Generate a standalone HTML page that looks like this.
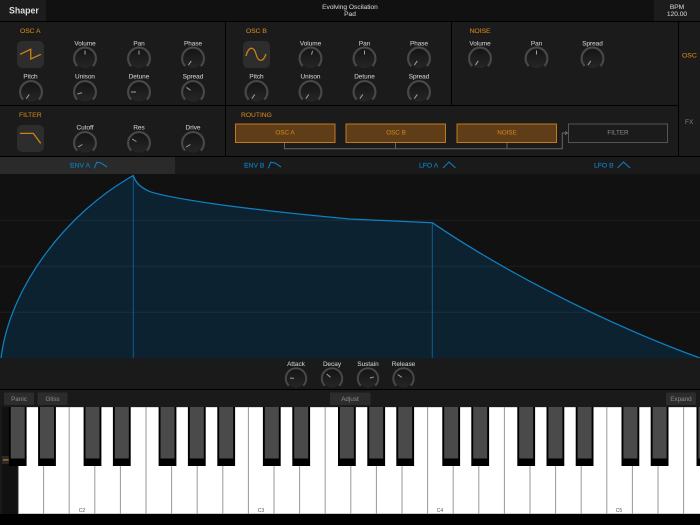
<!DOCTYPE html>
<html>
<head>
<meta charset="utf-8">
<title>Shaper</title>
<style>
html,body{margin:0;padding:0;background:#000;}
svg{display:block;}
text{font-family:"Liberation Sans",sans-serif;}
.l{font-size:6.4px;fill:#c4c4c4;stroke:#c4c4c4;stroke-width:.1;text-anchor:middle;}
.tp{font-size:6.6px;fill:#c4c4c4;stroke:#c4c4c4;stroke-width:.1;text-anchor:middle;}
.h{font-size:6.7px;fill:#c9801c;stroke:#c9801c;stroke-width:.12;}
.b{font-size:6.3px;fill:#c9801c;stroke:#c9801c;stroke-width:.1;text-anchor:middle;}
.t{font-size:6.8px;fill:#0e7cc0;stroke:#0e7cc0;stroke-width:.15;}
.g{font-size:6.3px;fill:#828282;stroke:#828282;stroke-width:.1;text-anchor:middle;}
.i{stroke:#d07f16;stroke-width:1.3;fill:none;}
.n{stroke:#0e7cc0;stroke-width:1.1;fill:none;}
.p{stroke:#a0a0a0;stroke-width:1;}
</style>
</head>
<body>
<svg width="700" height="525" viewBox="0 0 700 525" xmlns="http://www.w3.org/2000/svg">
<defs>
<linearGradient id="d" x1="0" y1="0" x2="0" y2="1"><stop offset="0" stop-color="#151515"/><stop offset="1" stop-color="#262626"/></linearGradient>
<g id="k"><circle r="9.6" fill="url(#d)"/><path d="M-7.8,7.6A10.9,10.9 0 1 1 7.8,7.6" fill="none" stroke="#484848" stroke-width="2.2"/></g>
<g id="s"><circle r="9" fill="url(#d)"/><path d="M-7.2,7.2A10.2,10.2 0 1 1 7.2,7.2" fill="none" stroke="#484848" stroke-width="2"/></g>
<g id="bk"><rect x="-8.9" y="407" width="17.8" height="59" fill="#000"/><rect x="-7" y="407" width="14" height="51.5" fill="#4a4a4a"/></g>
</defs>

<rect width="700" height="525" fill="#000"/>
<!-- top bar -->
<rect width="700" height="21" fill="#111"/>
<rect width="46" height="21" fill="#1c1c1c"/>
<rect x="654" width="46" height="21" fill="#1c1c1c"/>
<text x="9" y="13.3" font-size="8.8" font-weight="bold" fill="#ddd">Shaper</text>
<text x="350" y="9" class="tp">Evolving Oscilation</text>
<text x="350" y="15.8" class="tp">Pad</text>
<text x="677" y="9" class="tp">BPM</text>
<text x="677" y="16" class="tp">120.00</text>

<!-- panels -->
<rect y="22" width="225" height="83" fill="#1b1b1b"/>
<rect x="226" y="22" width="225" height="83" fill="#1b1b1b"/>
<rect x="452" y="22" width="226" height="83" fill="#1b1b1b"/>
<rect y="106" width="225" height="50" fill="#1b1b1b"/>
<rect x="226" y="106" width="452" height="50" fill="#1b1b1b"/>
<rect x="679" y="22" width="21" height="134" fill="#1b1b1b"/>

<text x="20" y="33.2" class="h">OSC A</text>
<text x="19" y="117.2" class="h">FILTER</text>
<text x="246" y="33.2" class="h">OSC B</text>
<text x="241" y="117.2" class="h">ROUTING</text>
<text x="469.7" y="33.2" class="h">NOISE</text>
<text x="682" y="57.3" font-size="6.8" fill="#c9801c" stroke="#c9801c" stroke-width=".12">OSC</text>
<text x="685" y="124.2" font-size="6.6" fill="#808080">FX</text>

<!-- pads -->
<rect x="17" y="41" width="27" height="27" rx="5" fill="#2d2d2d"/>
<path class="i" d="M20,54.3L30.7,49.3V59L41,54.3"/>
<rect x="243" y="41" width="27" height="27" rx="5" fill="#2d2d2d"/>
<path class="i" d="M246,56C249,45 254,47 256,54C258,62 263,63 266,54"/>
<rect x="17" y="125" width="27" height="27" rx="5" fill="#2d2d2d"/>
<path class="i" d="M20,133.4H33.3L40.7,143.3"/>

<!-- OSC A labels -->
<text x="85" y="45.6" class="l">Volume</text><text x="139" y="45.6" class="l">Pan</text><text x="193" y="45.6" class="l">Phase</text>
<text x="30.5" y="78.4" class="l">Pitch</text><text x="85" y="78.4" class="l">Unison</text><text x="139" y="78.4" class="l">Detune</text><text x="193" y="78.4" class="l">Spread</text>
<text x="85" y="129.6" class="l">Cutoff</text><text x="139" y="129.6" class="l">Res</text><text x="193" y="129.6" class="l">Drive</text>
<!-- OSC B labels -->
<text x="310.5" y="45.6" class="l">Volume</text><text x="364.5" y="45.6" class="l">Pan</text><text x="419" y="45.6" class="l">Phase</text>
<text x="256.5" y="78.4" class="l">Pitch</text><text x="310.5" y="78.4" class="l">Unison</text><text x="364.5" y="78.4" class="l">Detune</text><text x="419" y="78.4" class="l">Spread</text>
<!-- Noise labels -->
<text x="480" y="45.6" class="l">Volume</text><text x="536.5" y="45.6" class="l">Pan</text><text x="592.5" y="45.6" class="l">Spread</text>

<!-- knobs -->
<g transform="translate(85,58.5)"><use href="#k"/><line class="p" y1="-4" y2="-8" transform="rotate(0)"/></g>
<g transform="translate(139,58.5)"><use href="#k"/><line class="p" y1="-4" y2="-8" transform="rotate(0)"/></g>
<g transform="translate(193,58.5)"><use href="#k"/><line class="p" y1="-3" y2="-8" transform="rotate(-145)"/></g>
<g transform="translate(31,92)"><use href="#k"/><line class="p" y1="-3" y2="-8" transform="rotate(-145)"/></g>
<g transform="translate(85,92)"><use href="#k"/><line class="p" y1="-3" y2="-8" transform="rotate(-105)"/></g>
<g transform="translate(139,92)"><use href="#k"/><line class="p" y1="-3" y2="-8" transform="rotate(-90)"/></g>
<g transform="translate(193,92)"><use href="#k"/><line class="p" y1="-3" y2="-8" transform="rotate(-55)"/></g>
<g transform="translate(85,143)"><use href="#k"/><line class="p" y1="-3" y2="-8" transform="rotate(-120)"/></g>
<g transform="translate(139,143)"><use href="#k"/><line class="p" y1="-3" y2="-8" transform="rotate(-60)"/></g>
<g transform="translate(193,143)"><use href="#k"/><line class="p" y1="-3" y2="-8" transform="rotate(-120)"/></g>

<g transform="translate(310.5,58.5)"><use href="#k"/><line class="p" y1="-4" y2="-8" transform="rotate(15)"/></g>
<g transform="translate(364.5,58.5)"><use href="#k"/><line class="p" y1="-4" y2="-8" transform="rotate(0)"/></g>
<g transform="translate(419,58.5)"><use href="#k"/><line class="p" y1="-3" y2="-8" transform="rotate(-145)"/></g>
<g transform="translate(256.5,92)"><use href="#k"/><line class="p" y1="-3" y2="-8" transform="rotate(-145)"/></g>
<g transform="translate(310.5,92)"><use href="#k"/><line class="p" y1="-3" y2="-8" transform="rotate(-145)"/></g>
<g transform="translate(364.5,92)"><use href="#k"/><line class="p" y1="-3" y2="-8" transform="rotate(-145)"/></g>
<g transform="translate(419,92)"><use href="#k"/><line class="p" y1="-3" y2="-8" transform="rotate(-145)"/></g>

<g transform="translate(480,58.5)"><use href="#k"/><line class="p" y1="-3" y2="-8" transform="rotate(-145)"/></g>
<g transform="translate(536.5,58.5)"><use href="#k"/><line class="p" y1="-4" y2="-8" transform="rotate(0)"/></g>
<g transform="translate(592.5,58.5)"><use href="#k"/><line class="p" y1="-3" y2="-8" transform="rotate(-145)"/></g>

<!-- routing -->
<path d="M284.5,143V148.7H562.3V133H567M395.5,143V148.7M507,143V148.7" fill="none" stroke="#666" stroke-width="1"/>
<path d="M565,131.3L567.5,133L565,134.7" fill="none" stroke="#777" stroke-width=".8"/>
<rect x="235.5" y="124" width="99.5" height="18.5" fill="#5f3d18" stroke="#c07a1c"/>
<rect x="346" y="124" width="99.5" height="18.5" fill="#5f3d18" stroke="#c07a1c"/>
<rect x="457" y="124" width="99.5" height="18.5" fill="#5f3d18" stroke="#c07a1c"/>
<rect x="568.5" y="124" width="99" height="18.5" fill="#1b1b1b" stroke="#555"/>
<text x="285" y="134.6" class="b">OSC A</text>
<text x="396" y="134.6" class="b">OSC B</text>
<text x="507" y="134.6" class="b">NOISE</text>
<text x="618" y="134.6" class="g">FILTER</text>

<!-- tabs -->
<rect y="157" width="700" height="17" fill="#1a1a1a"/>
<rect y="157" width="175" height="17" fill="#2a2a2a"/>
<text x="70" y="167.5" class="t">ENV A</text>
<path class="n" d="M94.3,168.3L96.7,162.3L101,163L107,167"/>
<text x="244" y="167.5" class="t">ENV B</text>
<path class="n" d="M268.3,168.3L270.7,162.3L275,163L281,167"/>
<text x="419" y="167.5" class="t">LFO A</text>
<path class="n" d="M443,168L449,162L455.5,168"/>
<text x="594" y="167.5" class="t">LFO B</text>
<path class="n" d="M617.5,168L623.5,162L630,168"/>

<!-- graph -->
<rect y="174" width="700" height="184" fill="#111"/>
<path d="M1,358C10,285 68,212 133.3,175.5C136,184 142,188 150,191.7C170,198 230,208 350,219L432.3,222.7C490,262 590,318 700,358Z" fill="#0d2230"/>
<path d="M0,220.3H700M0,266.3H700M0,312.3H700" stroke="#fff" stroke-opacity=".06" stroke-width="1"/>
<path d="M133.3,176V358M432.3,223V358" stroke="#0c5f92" stroke-width="1"/>
<path d="M1,358C10,285 68,212 133.3,175.5C136,184 142,188 150,191.7C170,198 230,208 350,219L432.3,222.7C490,262 590,318 700,358" fill="none" stroke="#0f80c2" stroke-width="1.25"/>

<!-- bottom knob strip -->
<rect y="358" width="700" height="31" fill="#1a1a1a"/>
<text x="296" y="366.2" class="l">Attack</text>
<text x="332" y="366.2" class="l">Decay</text>
<text x="368" y="366.2" class="l">Sustain</text>
<text x="403.5" y="366.2" class="l">Release</text>
<g transform="translate(296,378.5)"><use href="#s"/><line class="p" y1="-2" y2="-6" transform="rotate(-85)"/></g>
<g transform="translate(332,378.5)"><use href="#s"/><line class="p" y1="-2" y2="-7" transform="rotate(-50)"/></g>
<g transform="translate(368,378.5)"><use href="#s"/><line class="p" y1="-2" y2="-6" transform="rotate(75)"/></g>
<g transform="translate(403.5,378.5)"><use href="#s"/><line class="p" y1="-2" y2="-7" transform="rotate(-55)"/></g>

<!-- key bar -->
<rect y="390" width="700" height="17" fill="#1a1a1a"/>
<rect x="4" y="392.5" width="30" height="12.5" rx="1" fill="#2c2c2c"/>
<rect x="37.5" y="392.5" width="30" height="12.5" rx="1" fill="#2c2c2c"/>
<rect x="330" y="392.5" width="40.5" height="12.5" rx="1" fill="#2c2c2c"/>
<rect x="666" y="392.5" width="30" height="12.5" rx="1" fill="#2c2c2c"/>
<text x="19" y="400.8" class="g">Panic</text>
<text x="52.5" y="400.8" class="g">Gliss</text>
<text x="350" y="400.8" class="g">Adjust</text>
<text x="681" y="400.8" class="g">Expand</text>

<!-- keyboard -->
<rect x="0" y="407" width="18" height="107" fill="#1a1a1a"/>
<rect x="2" y="407" width="15" height="107" fill="#111"/>
<rect x="2" y="456" width="14" height="8" fill="#2a2a2a"/>
<rect x="3" y="459.3" width="12" height="1.2" fill="#c47a17"/>
<rect x="18" y="407" width="682" height="106.5" fill="#fff"/>
<rect x="18" y="407" width="682" height="1" fill="#ddd"/>
<rect x="18" y="513" width="682" height="1" fill="#ccc"/>
<path d="M18.5,407V514M43.6,407V514M69.2,407V514M94.8,407V514M120.4,407V514M146,407V514M171.6,407V514M197.2,407V514M222.8,407V514M248.4,407V514M274,407V514M299.6,407V514M325.2,407V514M350.8,407V514M376.4,407V514M402,407V514M427.6,407V514M453.2,407V514M478.8,407V514M504.4,407V514M530,407V514M555.6,407V514M581.2,407V514M606.8,407V514M632.4,407V514M658,407V514M683.6,407V514" stroke="#999" stroke-width="1" fill="none"/>
<use href="#bk" x="17.7"/><use href="#bk" x="47"/><use href="#bk" x="92.5"/><use href="#bk" x="121.8"/><use href="#bk" x="167.5"/><use href="#bk" x="196.8"/><use href="#bk" x="226.2"/><use href="#bk" x="271.8"/><use href="#bk" x="301.2"/><use href="#bk" x="346.9"/><use href="#bk" x="376.2"/><use href="#bk" x="405.2"/><use href="#bk" x="451.2"/><use href="#bk" x="480.2"/><use href="#bk" x="526.2"/><use href="#bk" x="555.4"/><use href="#bk" x="584.6"/><use href="#bk" x="630.4"/><use href="#bk" x="659.6"/><use href="#bk" x="705.4"/>
<text x="82" y="511.8" font-size="5" fill="#555" text-anchor="middle">C2</text>
<text x="261" y="511.8" font-size="5" fill="#555" text-anchor="middle">C3</text>
<text x="440" y="511.8" font-size="5" fill="#555" text-anchor="middle">C4</text>
<text x="619" y="511.8" font-size="5" fill="#555" text-anchor="middle">C5</text>
</svg>
</body>
</html>
